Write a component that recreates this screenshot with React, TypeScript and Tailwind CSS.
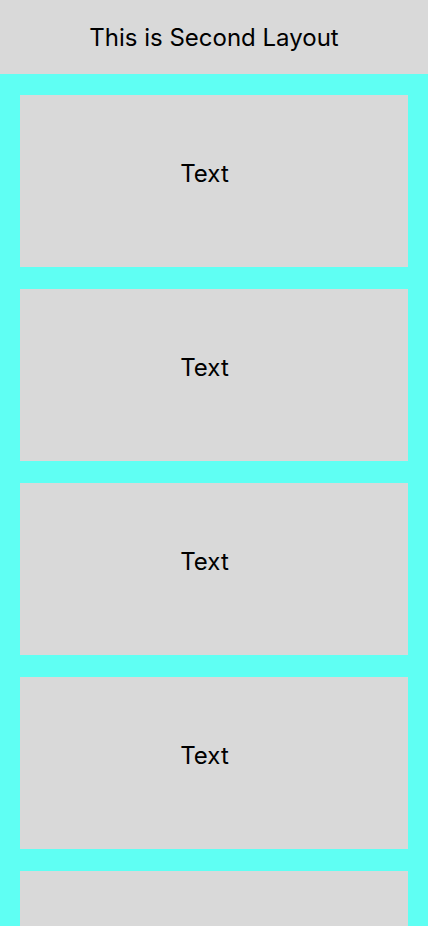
export default function App() {
  const cards = [1, 2, 3, 4, 5]
  return (
    <div className="min-h-screen bg-[#5ffff3]" style={{ fontFamily: 'Inter, "Noto Sans", sans-serif' }}>
      <header className="h-[74px] bg-[#d9d9d9] flex items-center justify-center pt-[2px]">
        <h1 className="text-2xl text-black font-normal">This is Second Layout</h1>
      </header>
      <main className="flex flex-col gap-[22px] px-5 pt-[21px] pb-5">
        {cards.map(i => (
          <div key={i} className="h-[172px] bg-[#d9d9d9] flex items-center justify-center pr-[19px] pb-[14px]">
            <span className="text-2xl text-black">Text</span>
          </div>
        ))}
      </main>
    </div>
  )
}
